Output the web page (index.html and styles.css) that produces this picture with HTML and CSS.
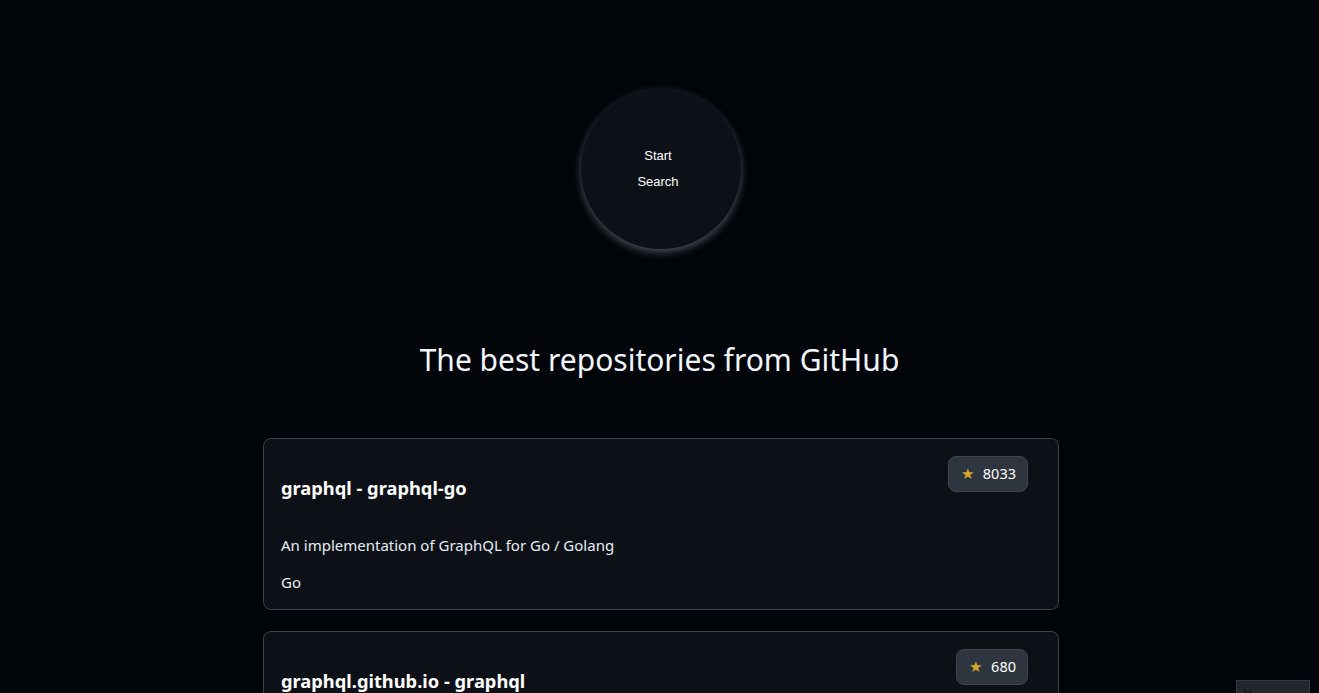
FILE: index.html
```html
<!DOCTYPE html>
<html lang="en">
<head>
<meta charset="utf-8">
<title>Best repositories</title>
<link rel="stylesheet" href="styles.css">
</head>
<body>
<main class="page">
  <div class="hero">
    <button class="search-btn"><span>Start</span><span>Search</span></button>
  </div>
  <h1 class="heading">The best repositories from GitHub</h1>
  <section class="list">
    <article class="card">
      <div class="card-head">
        <h2 class="title">graphql - graphql-go</h2>
        <div class="stars"><span class="star">★</span><span class="count">8033</span></div>
      </div>
      <p class="desc">An implementation of GraphQL for Go / Golang</p>
      <p class="lang">Go</p>
    </article>
    <article class="card">
      <div class="card-head">
        <h2 class="title">graphql.github.io - graphql</h2>
        <div class="stars"><span class="star">★</span><span class="count">680</span></div>
      </div>
      <p class="desc">GraphQL Documentation at graphql.org</p>
      <p class="lang">JavaScript</p>
    </article>
  </section>
</main>
<div class="corner-tab">N</div>
</body>
</html>
```
FILE: styles.css
```css
html, body {
  margin: 0;
  padding: 0;
  background: #010409;
  color: #e6edf3;
  font-family: "Noto Sans", "Open Sans", sans-serif;
}
.page {
  display: flex;
  flex-direction: column;
  align-items: center;
  padding-top: 89px;
}
.hero {
  display: flex;
  justify-content: center;
  padding-left: 3px;
}
.search-btn {
  width: 160px;
  height: 160px;
  border-radius: 50%;
  border: none;
  background: #0d1117;
  color: #ffffff;
  font-family: "Liberation Sans", Arial, sans-serif;
  font-size: 13px;
  display: flex;
  flex-direction: column;
  align-items: center;
  justify-content: center;
  gap: 11px;
  padding: 0 6px 2px 0;
  box-shadow: 0 3px 8px rgba(220, 225, 235, 0.35);
  cursor: pointer;
}
.heading {
  margin: 89px 0 0;
  font-weight: 400;
  font-size: 30px;
  line-height: 44px;
  color: #f0f6fc;
}
.list {
  margin-top: 56px;
  width: 796px;
  display: flex;
  flex-direction: column;
  gap: 21px;
  padding-left: 3px;
}
.card {
  background: #0d1117;
  border: 1px solid #3d444d;
  border-radius: 8px;
  padding: 16px 30px 16px 17px;
}
.card-head {
  display: flex;
  justify-content: space-between;
  align-items: flex-start;
}
.title {
  margin: 20px 0 0;
  font-size: 18.3px;
  font-weight: 700;
  line-height: 26px;
  color: #ffffff;
}
.stars {
  margin-top: 1px;
  display: flex;
  align-items: center;
  gap: 9px;
  background: #2f353e;
  border: 1px solid #3d444d;
  border-radius: 8px;
  padding: 6px 11px 7px 12px;
  font-size: 14.5px;
  line-height: 21px;
  color: #ffffff;
}
.star {
  color: #d4a72c;
  font-size: 15px;
}
.desc {
  margin: 33px 0 0;
  font-size: 15px;
  line-height: 22px;
}
.lang {
  margin: 15px 0 0;
  font-size: 15px;
  line-height: 22px;
}
.corner-tab {
  position: fixed;
  left: 1236px;
  top: 680px;
  width: 74px;
  height: 30px;
  background: #24272d;
  border: 1px solid #34383f;
  color: #111;
  font-size: 12px;
  padding: 4px 6px;
  box-sizing: border-box;
}
```
